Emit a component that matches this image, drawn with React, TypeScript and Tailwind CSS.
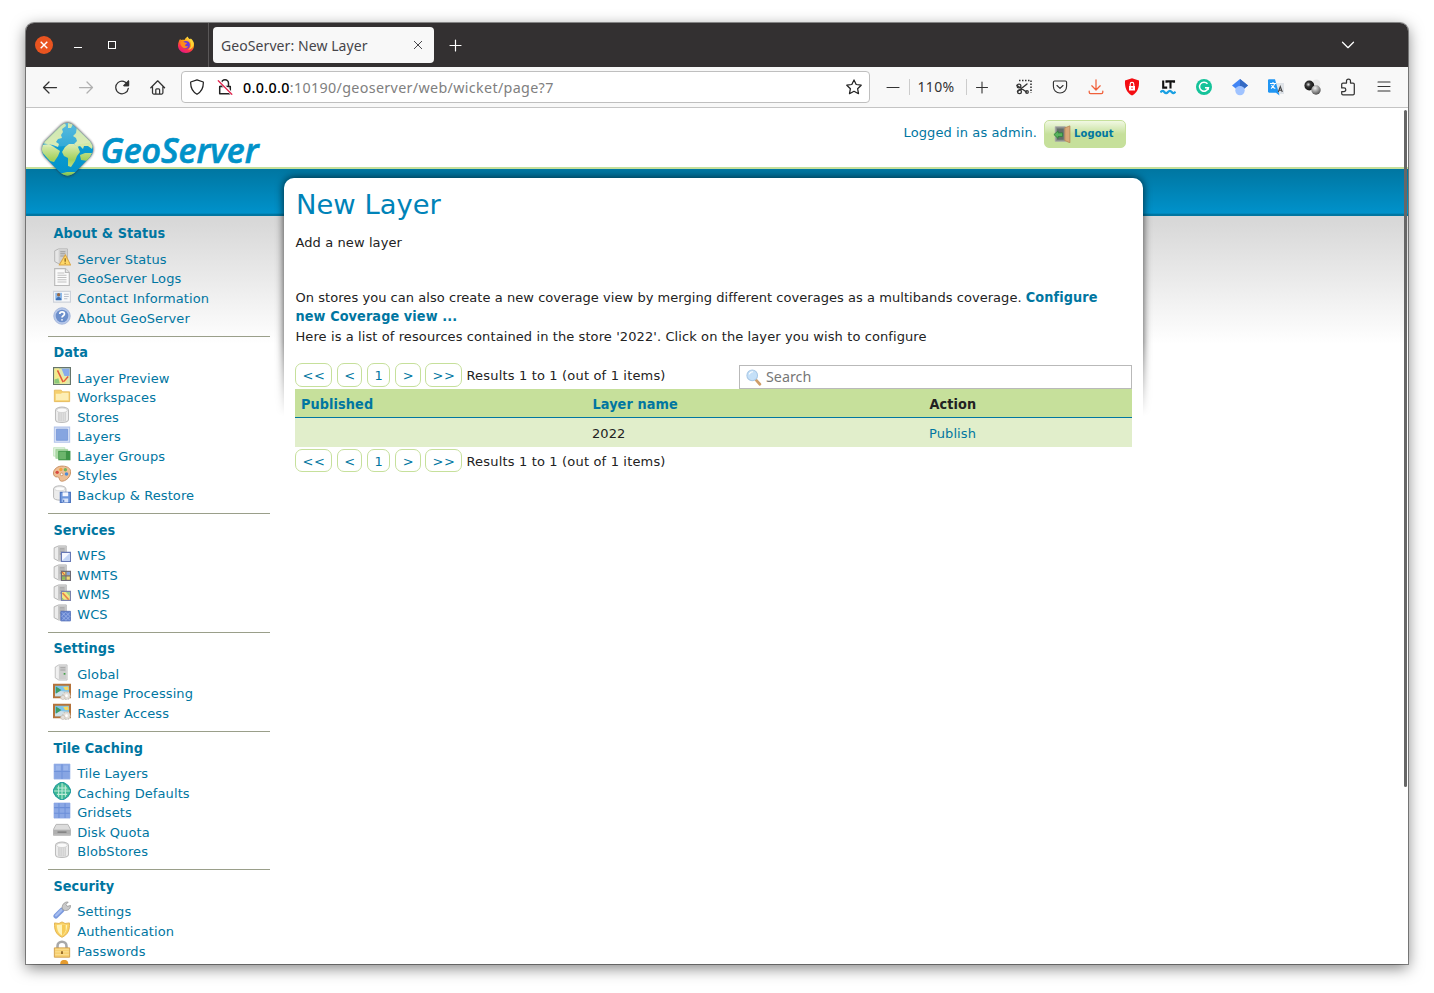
import React from "react";

type SvgProps = { children: React.ReactNode; size?: number; className?: string };

function Glyph({ children, size = 16, className = "" }: SvgProps) {
  return (
    <svg width={size} height={size} viewBox="0 0 16 16" fill="none" stroke="currentColor" strokeWidth="1.25" strokeLinecap="round" strokeLinejoin="round" className={`shrink-0 ${className}`}>
      {children}
    </svg>
  );
}

/* ---------- browser chrome ---------- */

function FirefoxLogo() {
  return (
    <svg width="18" height="18" viewBox="0 0 18 18">
      <defs>
        <linearGradient id="fx" x1="0.8" y1="0" x2="0.3" y2="1">
          <stop offset="0" stopColor="#fff44f" />
          <stop offset="0.4" stopColor="#ff980e" />
          <stop offset="0.7" stopColor="#ff3647" />
          <stop offset="1" stopColor="#e31587" />
        </linearGradient>
      </defs>
      <path d="M2 5c.3-1 .9-1.800 1.400-2.300 0 .7.200 1.200.5 1.500C5 3.500 6.300 3.600 7.500 4 8 2.500 9.500 1.500 10.800.5c.3 1.400 1.200 2 2.300 3 .6-.1.700-.6.700-1 2.400 1.900 3.500 4.400 3.200 7.500-.4 4-3.600 7-8 7s-8-3.200-8-7.500C1 7.800 1.300 6.400 2 5z" fill="url(#fx)" />
      <circle cx="9" cy="8.800" r="3.900" fill="#6a3be0" />
      <path d="M3.500 6c1.500-.7 3-.4 4.300.6L10 6.900c-.5 1.500-1.600 1.200-1.900 2.100-.1 1.200 1.500 1.700 3 .9-.8 2.400-3.800 3-5.600 1.300C3.800 9.900 3 8 3.500 6z" fill="#ff8a1a" />
      <path d="M10.800 1c.2 2.200 2.600 3.500 3.100 6 .7 2.800-.6 5.500-2.800 6.800 3.500-.7 5.800-3.300 5.500-6.800C16 5 14 4 13.800 2.500l-.7 1C12 3 11 2.500 10.800 1z" fill="#ffd93a" opacity=".9" />
    </svg>
  );
}

function TabBar() {
  return (
    <div className="flex h-11 shrink-0 items-center bg-[#333031] text-white">
      <div className="ml-[9px] flex size-[18px] items-center justify-center rounded-full bg-[#e95420]">
        <Glyph size={16}><path d="M4.700 4.700l6.600 6.600M11.300 4.700l-6.600 6.600" strokeLinecap="butt" strokeWidth="1.400" /></Glyph>
      </div>
      <div className="ml-[21px] mt-[5px] h-px w-2 bg-white" />
      <div className="ml-[26px] size-2 border border-white" />
      <div className="ml-[61px] flex"><FirefoxLogo /></div>
      <div className="ml-[13px] h-full w-px bg-[#5a5758]" />
      <div className="ml-1 flex h-9 w-[221px] items-center justify-between rounded bg-[#f8f8f8] pl-2 pr-2 text-[#46454a]">
        <span className="whitespace-nowrap font-['Noto_Sans',sans-serif] text-[14px] tracking-[0.08px]">GeoServer: New Layer</span>
        <Glyph><path d="M4.300 4.300l7.400 7.400M11.700 4.300l-7.400 7.400" strokeWidth="1" /></Glyph>
      </div>
      <Glyph size={16} className="ml-[13px]"><path d="M8.500 3v11M3 8.500h11" strokeWidth="1.200" /></Glyph>
      <div className="ml-auto mr-[52px]"><Glyph size={16} className="block"><path d="M2.500 5.200L8 10.700l5.500-5.500" /></Glyph></div>
    </div>
  );
}

function Cell({ children, className = "" }: { children: React.ReactNode; className?: string }) {
  return <div className={`flex w-9 shrink-0 items-center justify-center ${className}`}>{children}</div>;
}

function Toolbar() {
  return (
    <div className="flex h-[41px] shrink-0 items-center border-b border-[#c4c4c4] bg-[#f8f8f8] pl-1.5 text-[#333]">
      <Cell><Glyph><path d="M1.500 8.500h13M7 3L1.500 8.500 7 14" /></Glyph></Cell>
      <Cell className="text-[#b0b0b0]"><Glyph><path d="M1.500 8.500h13M9 3L14.500 8.500 9 14" /></Glyph></Cell>
      <Cell>
        <Glyph><path d="M14 6.300A6.300 6.300 0 1 0 14.300 9.300M14.500 2v4.500H10" /><path d="M14.500 2v4.500H10z" fill="currentColor" /></Glyph>
      </Cell>
      <Cell>
        <Glyph><path d="M.8 8.800L7.700 1.800l6.900 7M2.500 7.500v6.300c0 .8.500 1.200 1.200 1.200h8c.7 0 1.200-.4 1.200-1.200V7.500M5.800 14.800v-4.100c0-.6.300-.9.900-.9h2c.6 0 .9.300.9.900v4.100" /></Glyph>
      </Cell>
      <div className="ml-[5px] flex h-8 w-[689px] shrink-0 items-center rounded border border-[#bfbfbf] bg-white pl-[7px] pr-[7px]">
        <Glyph className="text-[#222]"><path d="M8 .8L14.300 3c.3 5.500-1.700 9.800-6.300 12.300C3.400 12.800 1.400 8.500 1.700 3z" /></Glyph>
        <Glyph className="ml-3 text-[#222]">
          <path d="M4.500 7.500V4.300a3.500 3.500 0 0 1 7 0V7.500M2.700 7.500h10.600v7.200H2.700z" strokeWidth="1.500" />
          <path d="M1 1l14.500 14.500" stroke="#fff" strokeWidth="3" />
          <path d="M1.300 1.800l13.500 13.500" stroke="#e22850" strokeWidth="1.300" />
        </Glyph>
        <span className="ml-[10px] mt-px whitespace-nowrap font-['Noto_Sans',sans-serif] text-[14.300px] tracking-[0.34px] text-[#808080]">
          <span className="font-medium text-black">0.0.0.0</span>:10190/geoserver/web/wicket/page?7
        </span>
        <Glyph className="ml-auto text-[#222]"><path d="M8 .9l2.200 4.600 5 .7-3.600 3.500.9 5L8 12.300l-4.500 2.400.9-5L.8 6.200l5-.7z" /></Glyph>
      </div>
      <div className="ml-[7px] flex w-8 justify-center"><Glyph><path d="M2 8.500h12" strokeWidth="1.100" /></Glyph></div>
      <div className="h-4 w-px bg-[#ccc]" />
      <div className="-mt-0.5 w-[56px] pr-1 text-center font-['Noto_Sans',sans-serif] text-[14px] tracking-[0.3px]">110%</div>
      <div className="h-4 w-px bg-[#ccc]" />
      <div className="flex w-[29px] justify-center"><Glyph><path d="M2.500 8.500h11M8 3v11" strokeWidth="1.100" /></Glyph></div>
      <div className="ml-[10px] flex">
        <Cell>
          <Glyph>
            <path d="M3 1.500h12v12.500" strokeDasharray="1.500 1.500" strokeLinecap="butt" strokeWidth="1.600" />
            <path d="M1 6.500l9.500 6.500M1.500 12.500L11 5" strokeWidth="1.400" />
            <circle cx="3" cy="7" r="1.900" /><circle cx="3.500" cy="12.800" r="1.900" /><circle cx="11" cy="13" r="1.300" />
          </Glyph>
        </Cell>
        <Cell>
          <Glyph><path d="M2.700 2h10.600c.8 0 1.300.5 1.300 1.300v4c0 4-2.800 6.700-6.600 6.700S1.400 11.300 1.400 7.300v-4C1.400 2.500 1.900 2 2.700 2zM5 6.500l3 2.800 3-2.800" strokeWidth="1.150" /></Glyph>
        </Cell>
        <Cell className="text-[#f0603a]"><Glyph><path d="M8 .8v10M3.800 6.800L8 11l4.200-4.200M1.200 12v1.200c0 .9.500 1.400 1.400 1.400h10.800c.9 0 1.400-.5 1.400-1.400V12" /></Glyph></Cell>
        <Cell>
          <svg width="16" height="18" viewBox="0 0 16 18">
            <path d="M8 .3l7 2.200C15.400 10 13.300 14.800 8 17.500 2.700 14.800.6 10 1 2.500z" fill="#f40d12" />
            <path d="M5 8h6v4.500H5z" fill="#fff" /><path d="M6.200 8V6.200a1.800 1.800 0 0 1 3.600 0V8" stroke="#fff" fill="none" strokeWidth="1.100" /><path d="M8 9.500v1.500" stroke="#f40d12" />
          </svg>
        </Cell>
        <Cell>
          <svg width="16" height="16" viewBox="0 0 16 16" fill="none">
            <path d="M3.200 1.500v7.100h4M6.500 3.800V2.400h7.500v1.400M10.500 2.400v7.200" stroke="#111" strokeWidth="2.100" />
            <path d="M.5 13.500c1.300-2 2.600-2 3.800-.5s2.500 1.500 3.700 0 2.500-1.500 3.700 0 2.500 1.500 3.700-.3" stroke="#1ba0e2" strokeWidth="2.200" />
          </svg>
        </Cell>
        <Cell>
          <svg width="16" height="16" viewBox="0 0 16 16" fill="none">
            <circle cx="8" cy="8" r="8" fill="#15c39a" />
            <path d="M11.500 4.800A4.500 4.500 0 1 0 12.400 8.800H9" stroke="#fff" strokeWidth="1.500" /><path d="M10.400 8.800h2v2" stroke="#fff" strokeWidth="1.200" />
          </svg>
        </Cell>
        <Cell>
          <svg width="16" height="17" viewBox="0 0 16 17">
            <path d="M8 0L0 6.500l4 3.200h8l4-3.200z" fill="#4285f4" /><path d="M8 0l8 6.500-4 3.200L8 7z" fill="#356ac3" />
            <circle cx="8" cy="11.600" r="4.700" fill="#a0c3ff" />
          </svg>
        </Cell>
        <Cell>
          <svg width="16" height="17" viewBox="0 0 16 17" fill="none">
            <path d="M7 4h9v11H9z" fill="#dfe3e8" />
            <path d="M0 1.500C0 .7.500.3 1.200.3H7l4.500 16.200L8 13.800H1.200C.5 13.800 0 13.300 0 12.600z" fill="#2196f3" />
            <path d="M2 4.500h6M5 3v1.500M3 9.500c2-1.200 3.200-2.800 3.700-5M3.500 6c.8 1.700 2 2.800 3.800 3.500" stroke="#fff" strokeWidth="1.100" />
            <path d="M10.300 13l2-5.500 2 5.500M11 11.300h2.700" stroke="#444" strokeWidth="1.100" />
          </svg>
        </Cell>
        <Cell>
          <svg width="17" height="16" viewBox="0 0 17 16">
            <defs>
              <radialGradient id="ballDark" cx=".4" cy=".4" r=".6"><stop offset="0" stopColor="#ddd" /><stop offset=".4" stopColor="#333" /><stop offset="1" stopColor="#111" /></radialGradient>
              <radialGradient id="ballGrey" cx=".4" cy=".3" r=".75"><stop offset="0" stopColor="#eee" /><stop offset=".6" stopColor="#8a8a8a" /><stop offset="1" stopColor="#444" /></radialGradient>
            </defs>
            <circle cx="12.300" cy="4.500" r="4" fill="#e8e8e8" />
            <circle cx="5.300" cy="6.500" r="4.900" fill="url(#ballDark)" /><circle cx="12" cy="11" r="4.700" fill="url(#ballGrey)" />
          </svg>
        </Cell>
        <Cell>
          <svg width="16" height="18" viewBox="0 0 16 18" fill="none" stroke="currentColor" strokeWidth="1.250" strokeLinejoin="round">
            <path d="M6.500 5V3a2 2 0 0 1 4 0v2H13c.8 0 1.300.5 1.300 1.300v9.200c0 .8-.5 1.300-1.300 1.300H3c-.8 0-1.300-.5-1.300-1.300V13.500H4a1.800 1.800 0 0 0 0-3.600H1.700V6.300C1.700 5.500 2.200 5 3 5z" />
          </svg>
        </Cell>
        <Cell><Glyph><path d="M2 3h12M2 7.500h12M2 12h12" strokeWidth="1.100" /></Glyph></Cell>
      </div>
    </div>
  );
}

/* ---------- sidebar icons ---------- */

function ServerBase() {
  return (
    <>
      <path d="M1.500 2.500L5 .8h7.800v13.400H5.500L1.500 12z" fill="#e6e6e6" stroke="#b0b0b0" strokeWidth=".8" />
      <path d="M5 1.200h7.300v12.500H5z" fill="#d0d0d0" /><path d="M6.500 3.300h4.500M6.500 5.200h4.500M6.500 7.100h4.500" stroke="#9a9a9a" strokeWidth=".9" />
    </>
  );
}

function ServerLeft() {
  return (
    <>
      <path d="M1 2.500L5 .8h6.800v13.400H5L1 12.200z" fill="#ececec" stroke="#b0b0b0" strokeWidth=".8" />
      <path d="M4.500 1.200h7v12.500h-7z" fill="#c6c6c6" /><path d="M6 2.800h4.200v6H6z" fill="#a9a9a9" /><path d="M6 4.500h4.200M6 6.500h4.200" stroke="#c8c8c8" strokeWidth=".8" />
    </>
  );
}

function Cylinder() {
  return (
    <>
      <path d="M2.200 4v8c0 3.600 11.600 3.600 11.600 0V4c0-4-11.600-4-11.600 0z" fill="#ececec" stroke="#bcbcbc" strokeWidth=".9" />
      <path d="M4.500 5.500h7v7.500c-2 .9-5 .9-7 0z" fill="#d0d0d0" /><path d="M6.300 6v7M8.200 6v7.300M10 6v7" stroke="#e6e6e6" strokeWidth=".7" />
      <ellipse cx="8" cy="3.800" rx="4.800" ry="2" fill="#fafafa" stroke="#d0d0d0" strokeWidth=".7" />
    </>
  );
}

function PictureGear() {
  return (
    <>
      <path d="M.9 1.500h14.200v11.200H.9z" fill="#7fc4ea" stroke="#b5733a" strokeWidth="1.800" />
      <path d="M1.800 9l5-2 7.200 1v3.800H1.800z" fill="#cfe0e8" /><path d="M2.500 3l5 3.200-5 3.300z" fill="#3e9d67" /><path d="M9 3.500l4.500-.5.500 3-3 .5z" fill="#f6d95f" />
      <circle cx="12" cy="11.300" r="3.300" fill="#e4e0da" stroke="#c4beb6" strokeWidth="1" strokeDasharray="1.500 1" /><circle cx="8.800" cy="12.800" r="1.900" fill="#e4e0da" stroke="#c4beb6" strokeWidth=".6" /><circle cx="12" cy="11.300" r="1.200" fill="#fff" />
    </>
  );
}

const icons: Record<string, React.ReactNode> = {
  status: <><ServerBase /><path d="M11 6l4.700 9.200H5.500z" fill="#ffd867" stroke="#d9a548" strokeWidth=".9" strokeLinejoin="round" /><path d="M10.800 9v3.300M10.800 13v1" stroke="#7a5310" strokeWidth="1" /></>,
  logs: <><path d="M1.500.5h9.500l3.500 3.500v11.500h-13z" fill="#fafafa" stroke="#b9b9b9" /><path d="M11 .5V4h3.500" fill="#e5e5e5" stroke="#b9b9b9" /><path d="M4 4.500h6M4 6.500h8M4 8.500h8M4 10.500h8M4 12.500h8" stroke="#c0c0c0" strokeWidth=".9" /></>,
  contact: <><path d="M.5 3h15v9.500H.5z" fill="#f7f8fa" stroke="#cdd2da" /><path d="M2 4.300h6v6.500H2z" fill="#8db9ea" /><circle cx="5" cy="6" r="1.500" fill="#9a6a45" /><path d="M2.500 10.800c.3-3.700 4.700-3.700 5 0z" fill="#3f72b5" /><path d="M9.800 5.500h4.200M9.800 7.500h4.200M9.800 9.500h3" stroke="#b9bfca" strokeWidth=".9" /></>,
  about: <><circle cx="8" cy="8" r="7.300" fill="#b8c9ea" stroke="#9fb3da" strokeWidth=".8" /><circle cx="8" cy="8" r="5.600" fill="#6c8fcb" /><path d="M6 6.300c0-2.600 4.200-2.600 4.200 0C10.200 7.800 8 7.800 8 9.300M8 10.800v1.300" stroke="#fff" strokeWidth="1.500" fill="none" /></>,
  preview: <><path d="M.5.5h15v15H.5z" fill="#dfe9b0" stroke="#66756b" /><path d="M7.500 1.300h7.200V8h-4.500z" fill="#88abea" /><path d="M1.300 1.300h4L7 8l6 3-2 3.700H6L5 10l-3.700 4.700z" fill="#f4ea8c" /><path d="M1.300 11l3.500-1 1.200 4.700H1.300z" fill="#8cc979" /><path d="M4 3l5 10.500M13.500 8.500l-4 4.500" stroke="#e2583e" strokeWidth="1.300" fill="none" /></>,
  folder: <><path d="M1.200 2.800h6l1.300 1.500h6.300V13H1.200z" fill="#f6d06e" stroke="#e3b451" strokeWidth=".7" /><path d="M2.500 6h4.500l1.200-1h5.600v6.800H2.500z" fill="#fdeeb5" /></>,
  store: <Cylinder />,
  layer: <><path d="M1.200 1h13.600v13.400H1.200z" fill="#dce5f7" stroke="#b2c4ea" strokeWidth=".9" /><path d="M3 2.800h10v9.900H3z" fill="#86a5e0" stroke="#7394d8" strokeWidth=".7" /></>,
  groups: <><path d="M.5 1.500h10v7.500H.5z" fill="#e3f3e0" stroke="#c5e5c1" strokeWidth=".8" /><path d="M2.500 3h10.500v8H2.500z" fill="#aedba8" stroke="#9bce95" strokeWidth=".6" /><path d="M4.700 4.300h10.800v8.400H4.700z" fill="#3f9447" /><path d="M5.500 5h6v6.800h-6z" fill="#6db56c" /></>,
  styles: <><path d="M9 1C4 .5.500 4 .4 7c-.1 2.500 1.600 4 3.500 3.600C6 10.200 5 12.500 6.500 14c2 1.600 9.200-1.500 9.200-8C15.700 3 13 1.200 9 1z" fill="#eebf95" stroke="#c48a5c" strokeWidth=".8" /><circle cx="3.700" cy="6.500" r="1.500" fill="#da4b40" /><circle cx="7" cy="4" r="1.500" fill="#f3a33e" /><circle cx="11" cy="4.200" r="1.500" fill="#76b35a" /><circle cx="12" cy="8" r="1.600" fill="#4f8bd5" /><circle cx="7.700" cy="8.300" r="1.200" fill="#fff" stroke="#ba7b4b" strokeWidth=".6" /></>,
  backup: <><path d="M.5 3.500v7.500c0 3.300 11 3.300 11 0V3.500c0-3.700-11-3.700-11 0z" fill="#ececec" stroke="#b2b2b2" strokeWidth=".8" /><ellipse cx="6" cy="3.300" rx="4.500" ry="1.800" fill="#fcfcfc" stroke="#cfcfcf" strokeWidth=".6" /><path d="M6.500 6.500h9v9h-9z" fill="#6f97dc" stroke="#4f76c0" /><path d="M8.500 6.500h5v3.500h-5z" fill="#f4f7ff" /><path d="M8.500 12h5v3.500h-5z" fill="#d9e4fa" /><path d="M9.500 13v2" stroke="#4870bb" /></>,
  wfs: <><ServerLeft /><path d="M7.500 6.500h8v8h-8z" fill="#f4f7ff" stroke="#6678b5" /><path d="M15 7v7H8z" fill="#c2d4f5" /></>,
  wmts: <><ServerLeft /><path d="M7.500 6.500h8v8h-8z" fill="#f0d974" stroke="#6d6a74" /><path d="M12 7h3v3h-3z" fill="#86a5e0" /><path d="M8 11h3v3H8z" fill="#8cba5b" /><path d="M8 7l2.500 3" stroke="#df6d3b" /><path d="M11.500 6.500v8M7.500 10.500h8" stroke="#6d6a74" /></>,
  wms: <><ServerLeft /><path d="M7.500 6.500h8v8h-8z" fill="#f3e682" stroke="#7b83ad" /><path d="M11.500 7H15v4z" fill="#9ccf8a" /><path d="M8.500 8l5.500 6" stroke="#e8824c" strokeWidth="1.500" /><path d="M8 12l2 2H8z" fill="#8bc274" /></>,
  wcs: <><ServerLeft /><path d="M7 6.500h8.500v8.500H7z" fill="#6483cf" stroke="#5570ba" strokeWidth=".8" /><path d="M8 7.500l7 7M11.500 7.500l3.500 3.500M8 11l3.500 3.500M15 7.500l-7 7M11 7.500L7.500 11M15 11l-3.500 3.500" stroke="#a4baec" strokeWidth=".7" /></>,
  global: <><path d="M2 2.700L5.200.8h7.300v13.500H5.200L2 12.300z" fill="#f0f0f0" stroke="#bcbcbc" strokeWidth=".8" /><path d="M5.200 1.300H12v12.500H5.200z" fill="#cecece" /><path d="M6.500 3.300H11M6.500 5.300H11" stroke="#a0a0a0" strokeWidth=".9" /><path d="M9.500 8h1.500v1.500H9.500z" fill="#42a047" /></>,
  picture: <PictureGear />,
  tiles: <><path d="M.9.900h14.200v13.400H.9z" fill="#87a5e3" stroke="#9bb4e8" strokeWidth=".6" /><path d="M2.500 2.200h4.300v4.300H2.500zM9.200 2.200h4.300v4.300H9.200z" fill="#9cb6eb" /><path d="M8 1v13.300M1 7.500h14" stroke="#7093da" strokeWidth="1" /></>,
  caching: <><path d="M8 .2c1.800 0 3 1.500 5.200 2.800C14.500 5.200 15.800 6.500 15.800 8s-1.300 2.800-2.600 5C11 14.300 9.800 15.800 8 15.800S5 14.300 2.800 13C1.500 10.800.2 9.500.2 8s1.300-2.800 2.600-5C5 1.700 6.200.2 8 .2z" fill="#3fb894" stroke="#219a9c" strokeWidth=".9" /><path d="M8 1c1.500.5 5 4 6 6H8z" fill="#62c9a0" /><path d="M5 3v10M8 1v14M11 3v10M3.500 5.300h9M1 8h14M3.500 11h9" stroke="#c0ecd9" strokeWidth=".9" /></>,
  grid: <><path d="M.9.900h14.200v13.400H.9z" fill="#8ba8e5" stroke="#8aa6e4" strokeWidth=".6" /><path d="M5.300 1v13.300M10.700 1v13.300M1 5h14M1 10h14" stroke="#6c8fd9" strokeWidth=".9" /></>,
  disk: <><path d="M2.800 3h10.400l2.400 4.500v5.200H.4V7.500z" fill="#dcdcdc" stroke="#b0b0b0" strokeWidth=".8" /><path d="M.8 7.700h14.400v4.500H.8z" fill="#b0b0b0" /><path d="M4 9.900h8" stroke="#7c7c7c" strokeWidth="1.200" /></>,
  wrench: <><path d="M2.600 13.400L7.800 8.200" stroke="#7b9ade" strokeWidth="4.400" strokeLinecap="round" /><path d="M2.700 12.900l4.800-4.800" stroke="#a5bdf0" strokeWidth="2" strokeLinecap="round" /><path d="M8.300 7.300c-.8-3 1.400-7 5.200-6.300L11.500 3l1.200 1.800 2.900-.8c.1 3-2.500 5-5.600 4.300z" fill="#cacaca" stroke="#9a9a9a" strokeWidth=".8" /></>,
  shield: <><path d="M8 .8l2.700 1.400 3.900-.5c.4 6.500-1.400 10.300-6.600 12.800C2.800 12 1 8.200 1.400 1.700l3.900.5z" fill="#f9d062" stroke="#e0b04c" strokeWidth=".8" /><path d="M8 3l4.600.5c-.2 4.700-1.500 7.500-4.600 9.300C4.900 11 3.600 8.200 3.400 3.500z" fill="#fff3b8" /><path d="M8 3v9.800c1.500-1 2.600-2.300 3.300-4.300V3.500z" fill="#f6cb58" /></>,
  lock: <><path d="M4 8V5.500a4 4 0 0 1 8 0V8" fill="none" stroke="#a8a8a8" strokeWidth="2.300" /><path d="M1.200 7h13.600v8.300H1.200z" fill="#f7d06f" stroke="#cf9c48" strokeWidth=".8" /><path d="M2 8.200h12M2 10.500h12M2 13h12" stroke="#fbe09a" strokeWidth=".8" /><path d="M8 10v2.500" stroke="#8a5d1d" strokeWidth="1.500" /></>,
  user: <><circle cx="10" cy="3.500" r="3.600" fill="#e59b2e" /><path d="M4 12c0-7 12-7 12 0z" fill="#e59b2e" /></>,
};

const sections: { title: string; items: [string, string][] }[] = [
  { title: "About & Status", items: [["status", "Server Status"], ["logs", "GeoServer Logs"], ["contact", "Contact Information"], ["about", "About GeoServer"]] },
  { title: "Data", items: [["preview", "Layer Preview"], ["folder", "Workspaces"], ["store", "Stores"], ["layer", "Layers"], ["groups", "Layer Groups"], ["styles", "Styles"], ["backup", "Backup & Restore"]] },
  { title: "Services", items: [["wfs", "WFS"], ["wmts", "WMTS"], ["wms", "WMS"], ["wcs", "WCS"]] },
  { title: "Settings", items: [["global", "Global"], ["picture", "Image Processing"], ["picture", "Raster Access"]] },
  { title: "Tile Caching", items: [["tiles", "Tile Layers"], ["caching", "Caching Defaults"], ["grid", "Gridsets"], ["disk", "Disk Quota"], ["store", "BlobStores"]] },
  { title: "Security", items: [["wrench", "Settings"], ["shield", "Authentication"], ["lock", "Passwords"], ["user", ""]] },
];

const bold = "font-['DejaVu_Sans_Condensed','DejaVu_Sans',sans-serif] text-[14.300px] font-bold tracking-[0.1px] [font-stretch:condensed]";

function Sidebar() {
  return (
    <nav className="w-[258px] shrink-0 pl-[22px] pr-[14px] pt-[48.800px] text-[#0076a1]">
      {sections.map((s) => (
        <section key={s.title} className="border-b border-[#9a9f8a] pb-[8.300px] pl-[5px] pt-[5.600px]">
          <h3 className={`mb-[5.500px] h-5 whitespace-nowrap pl-[0.400px] leading-5 ${bold}`}>{s.title}</h3>
          <ul>
            {s.items.map(([icon, label], i) => (
              <li key={i} className="flex h-[19.600px] items-center">
                <svg width="18" height="18" viewBox="0 0 16 16" fill="none" className="-mt-[2.500px] mr-[6.200px] shrink-0">{icons[icon]}</svg>
                <span className="whitespace-nowrap pt-[1.600px] tracking-[0.1px]">{label}</span>
              </li>
            ))}
          </ul>
        </section>
      ))}
    </nav>
  );
}

/* ---------- page ---------- */

function Logo() {
  return (
    <svg width="236" height="68" viewBox="36 114 236 68" className="relative z-10 -mb-[9px] ml-[10px] mt-1.5 shrink-0">
      <defs>
        <linearGradient id="sea" x1="0" y1="0" x2="0" y2="1"><stop offset="0" stopColor="#45b2da" /><stop offset=".5" stopColor="#0a9ad0" /><stop offset="1" stopColor="#0090c8" /></linearGradient>
        <linearGradient id="land" gradientUnits="userSpaceOnUse" x1="0" y1="122" x2="0" y2="176"><stop offset="0" stopColor="#c5e3a5" /><stop offset=".45" stopColor="#d5e9a8" /><stop offset=".7" stopColor="#a3d05b" /><stop offset=".85" stopColor="#c3e08a" /><stop offset="1" stopColor="#7cc043" /></linearGradient>
        <clipPath id="globe"><path d="M67.500 123c3 0 5 1.500 7 3.200l15.300 15c4.300 5 4.300 11 0 16L76 171.500c-5.500 5.500-11.500 5.500-17 0l-13.800-14.300c-4.300-5-4.300-11 0-16l15.300-15c2-1.700 4-3.200 7-3.200z" /></clipPath>
        <filter id="soft" x="-20%" y="-20%" width="140%" height="140%"><feGaussianBlur stdDeviation="1.300" /></filter>
      </defs>
      <path d="M67.500 122c3 0 5 1.500 7 3.200l15.700 15.500c4.500 5 4.500 11.500 0 16.500L76 172c-5.500 6-11.500 6-17 0l-14.200-14.800c-4.500-5-4.500-11.500 0-16.500l15.700-15.500c2-1.700 4-3.200 7-3.200z" fill="#333" opacity=".75" filter="url(#soft)" />
      <g clipPath="url(#globe)">
        <rect x="38" y="118" width="60" height="64" fill="url(#sea)" />
        <path d="M60 124l5-1 1 3-4 3 1 3-2 3 1 3-4 1-2 3 3 2-1 3-5-2-6-1-6-1 2-6z" fill="url(#land)" />
        <path d="M42 145l7-1 5 3 6 4-2 5-4 6-4-1-8-9z" fill="url(#land)" />
        <path d="M68 123l5 1-2 4-3 0zM77 126l17 17-2 6-4-3-4 0-1 3-3-3-3 1-3-3 3-3-1-3-3-2 3-3z" fill="url(#land)" />
        <path d="M65 147l4-3 5 0 4 3 2 5-3 4-2 5-4 6-3-1 0-8-4-2-2-4z" fill="url(#land)" />
        <path d="M80 155l5-2 7 0-4 8-7-1z" fill="url(#land)" />
        <path d="M59 174l8-2 10 0-4 5-9 1z" fill="url(#land)" />
        <path d="M67 120l-25 26c15 2 34-1 51-4z" fill="#fff" opacity=".15" />
      </g>
      <text x="100.500" y="162.600" textLength="158" lengthAdjust="spacingAndGlyphs" fill="#0092c9" className="font-['Open_Sans',sans-serif] text-[34.500px] font-semibold italic" stroke="#0092c9" strokeWidth=".7">GeoServer</text>
    </svg>
  );
}

function Door() {
  return (
    <svg width="18" height="18" viewBox="0 0 16 16">
      <path d="M2 1.500h9v13H2z" fill="#8b908d" stroke="#a8a8a8" strokeWidth=".7" /><path d="M3.500 3h6v10h-6z" fill="#636d68" />
      <path d="M10.500 2.500L15 .8v15l-4.500-2z" fill="#d9a878" stroke="#b5824f" strokeWidth=".7" />
      <path d="M.8 8.500L4.500 5.300v1.700h4v3.200h-4v1.700z" fill="#59b35d" stroke="#2c8238" strokeWidth=".7" />
    </svg>
  );
}

function Pager({ compact = false }: { compact?: boolean }) {
  const box = compact ? "h-[23px]" : "h-6";
  const b = `flex items-center justify-center rounded-[7px] border border-[#c6e09b] bg-white pl-px pt-[2px] tracking-[0.6px] text-[#0076a1] ${box}`;
  return (
    <div className="flex items-center">
      <span className={`${b} w-[37px]`}>&lt;&lt;</span>
      <span className={`${b} ml-[5px] w-[25px]`}>&lt;</span>
      <span className={`${b} ml-[5px] w-[23px]`}>1</span>
      <span className={`${b} ml-[5px] w-[26px]`}>&gt;</span>
      <span className={`${b} ml-1 w-[37px]`}>&gt;&gt;</span>
      <span className="ml-[4.500px] whitespace-nowrap pt-[2px] tracking-[0.17px]">Results 1 to 1 (out of 1 items)</span>
    </div>
  );
}

function Content() {
  return (
    <main className="relative isolate mt-[9px] h-[900px] w-[858.500px] shrink-0">
      <div className="absolute -left-3 -right-3 -top-2 -z-10 h-[246px] overflow-hidden px-3 pt-2 [mask-image:linear-gradient(#000_70%,transparent_100%)]">
        <div className="h-[300px] rounded-[10px] shadow-[0_0_8px_rgba(0,0,0,0.75)]" />
      </div>
      <div className="h-full rounded-t-[10px] bg-white pl-[11px] pr-[10.500px] pt-[7px] text-[#222]">
        <h1 className="h-10 whitespace-nowrap pl-px text-[27.400px] leading-10 text-[#0083b8]">New Layer</h1>
        <p className="mt-2 h-5 pl-[0.500px] leading-5 tracking-[0.1px]">Add a new layer</p>
        <p className="mt-[35px] h-[38px] whitespace-nowrap pl-[0.500px] leading-[19px] tracking-[0.05px]">
          On stores you can also create a new coverage view by merging different coverages as a multibands coverage. <b className={`${bold} text-[#0076a1]`}>Configure<br />new Coverage view ...</b>
        </p>
        <p className="mt-px h-5 whitespace-nowrap pl-[0.500px] leading-5 tracking-[0.097px]">Here is a list of resources contained in the store '2022'. Click on the layer you wish to configure</p>
        <div className="mt-4 flex h-[27px] items-start justify-between">
          <Pager />
          <div className="mt-[2px] flex h-6 w-[393px] items-center border border-[#b9b9b9] bg-white pl-[5px]">
            <svg width="17" height="17" viewBox="0 0 16 16" fill="none">
              <path d="M10.500 10.500l3.500 3.800" stroke="#cf9d68" strokeWidth="2.600" strokeLinecap="round" /><circle cx="6.800" cy="6" r="5" fill="#c5e0f8" stroke="#a9c8e6" /><path d="M4 5c.5-1.700 1.700-2.500 3.500-2.500" stroke="#fff" />
            </svg>
            <span className="-mt-px ml-1 font-['Noto_Sans',sans-serif] text-[14.300px] text-[#777]">Search</span>
          </div>
        </div>
        <div className={`-mt-px box-content grid h-7 grid-cols-[291px_337px_1fr] items-center border-b border-[#0076a1] bg-[#c6e09b] pl-1.5 leading-none text-[#0076a1] ${bold}`}>
          <span className="pt-[3px]">Published</span><span className="pl-[0.500px] pt-[3px]">Layer name</span><span className="pl-[0.500px] pt-[3px] text-[#222]">Action</span>
        </div>
        <div className="grid h-[29px] grid-cols-[291px_337px_1fr] items-center bg-[#e1eecb] pl-1.5 pt-[3px] tracking-[0.1px]">
          <span /><span>2022</span><span className="text-[#0076a1]">Publish</span>
        </div>
        <div className="mt-0.5"><Pager compact /></div>
      </div>
    </main>
  );
}

export default function App() {
  return (
    <div className="h-[993px] w-[1434px] overflow-hidden bg-white px-[26px] pt-[23px]">
      <div className="relative flex h-[941px] w-[1382px] flex-col overflow-hidden rounded-t-lg bg-white font-['DejaVu_Sans',sans-serif] text-[13px] shadow-[0_0_0_1px_rgba(0,0,0,0.4),0_4px_15px_rgba(0,0,0,0.5)]">
        <TabBar />
        <Toolbar />
        <header className="flex h-[61px] shrink-0 items-start border-b-2 border-[#c6e09b] bg-white">
          <Logo />
          <div className="ml-auto mr-[282px] mt-3 flex items-center text-[#0076a1]">
            <span className="-mt-0.5 whitespace-nowrap tracking-[0.1px]">Logged in as admin.</span>
            <span className="ml-[7px] flex h-7 w-[82px] items-center rounded-[5px] border border-[#c6e09b] bg-linear-to-b from-[#f1f8e3] via-[#c6e09b] to-[#c6e09b] pl-2">
              <Door />
              <b className="ml-[3px] font-['DejaVu_Sans_Condensed','DejaVu_Sans',sans-serif] text-[11px] tracking-[0.15px]">Logout</b>
            </span>
          </div>
        </header>
        <div className="flex min-h-0 flex-1 items-start overflow-hidden bg-[linear-gradient(#0076a1,#0092cb_94%,#0076a1_96%,#0076a1),linear-gradient(#d8d8d8_30%,#fff)] bg-[length:100%_47px,100%_175px] bg-no-repeat">
          <Sidebar />
          <Content />
        </div>
        <div className="absolute right-px top-[87px] h-[677px] w-[3px] rounded-full bg-[#666]" />
      </div>
    </div>
  );
}
